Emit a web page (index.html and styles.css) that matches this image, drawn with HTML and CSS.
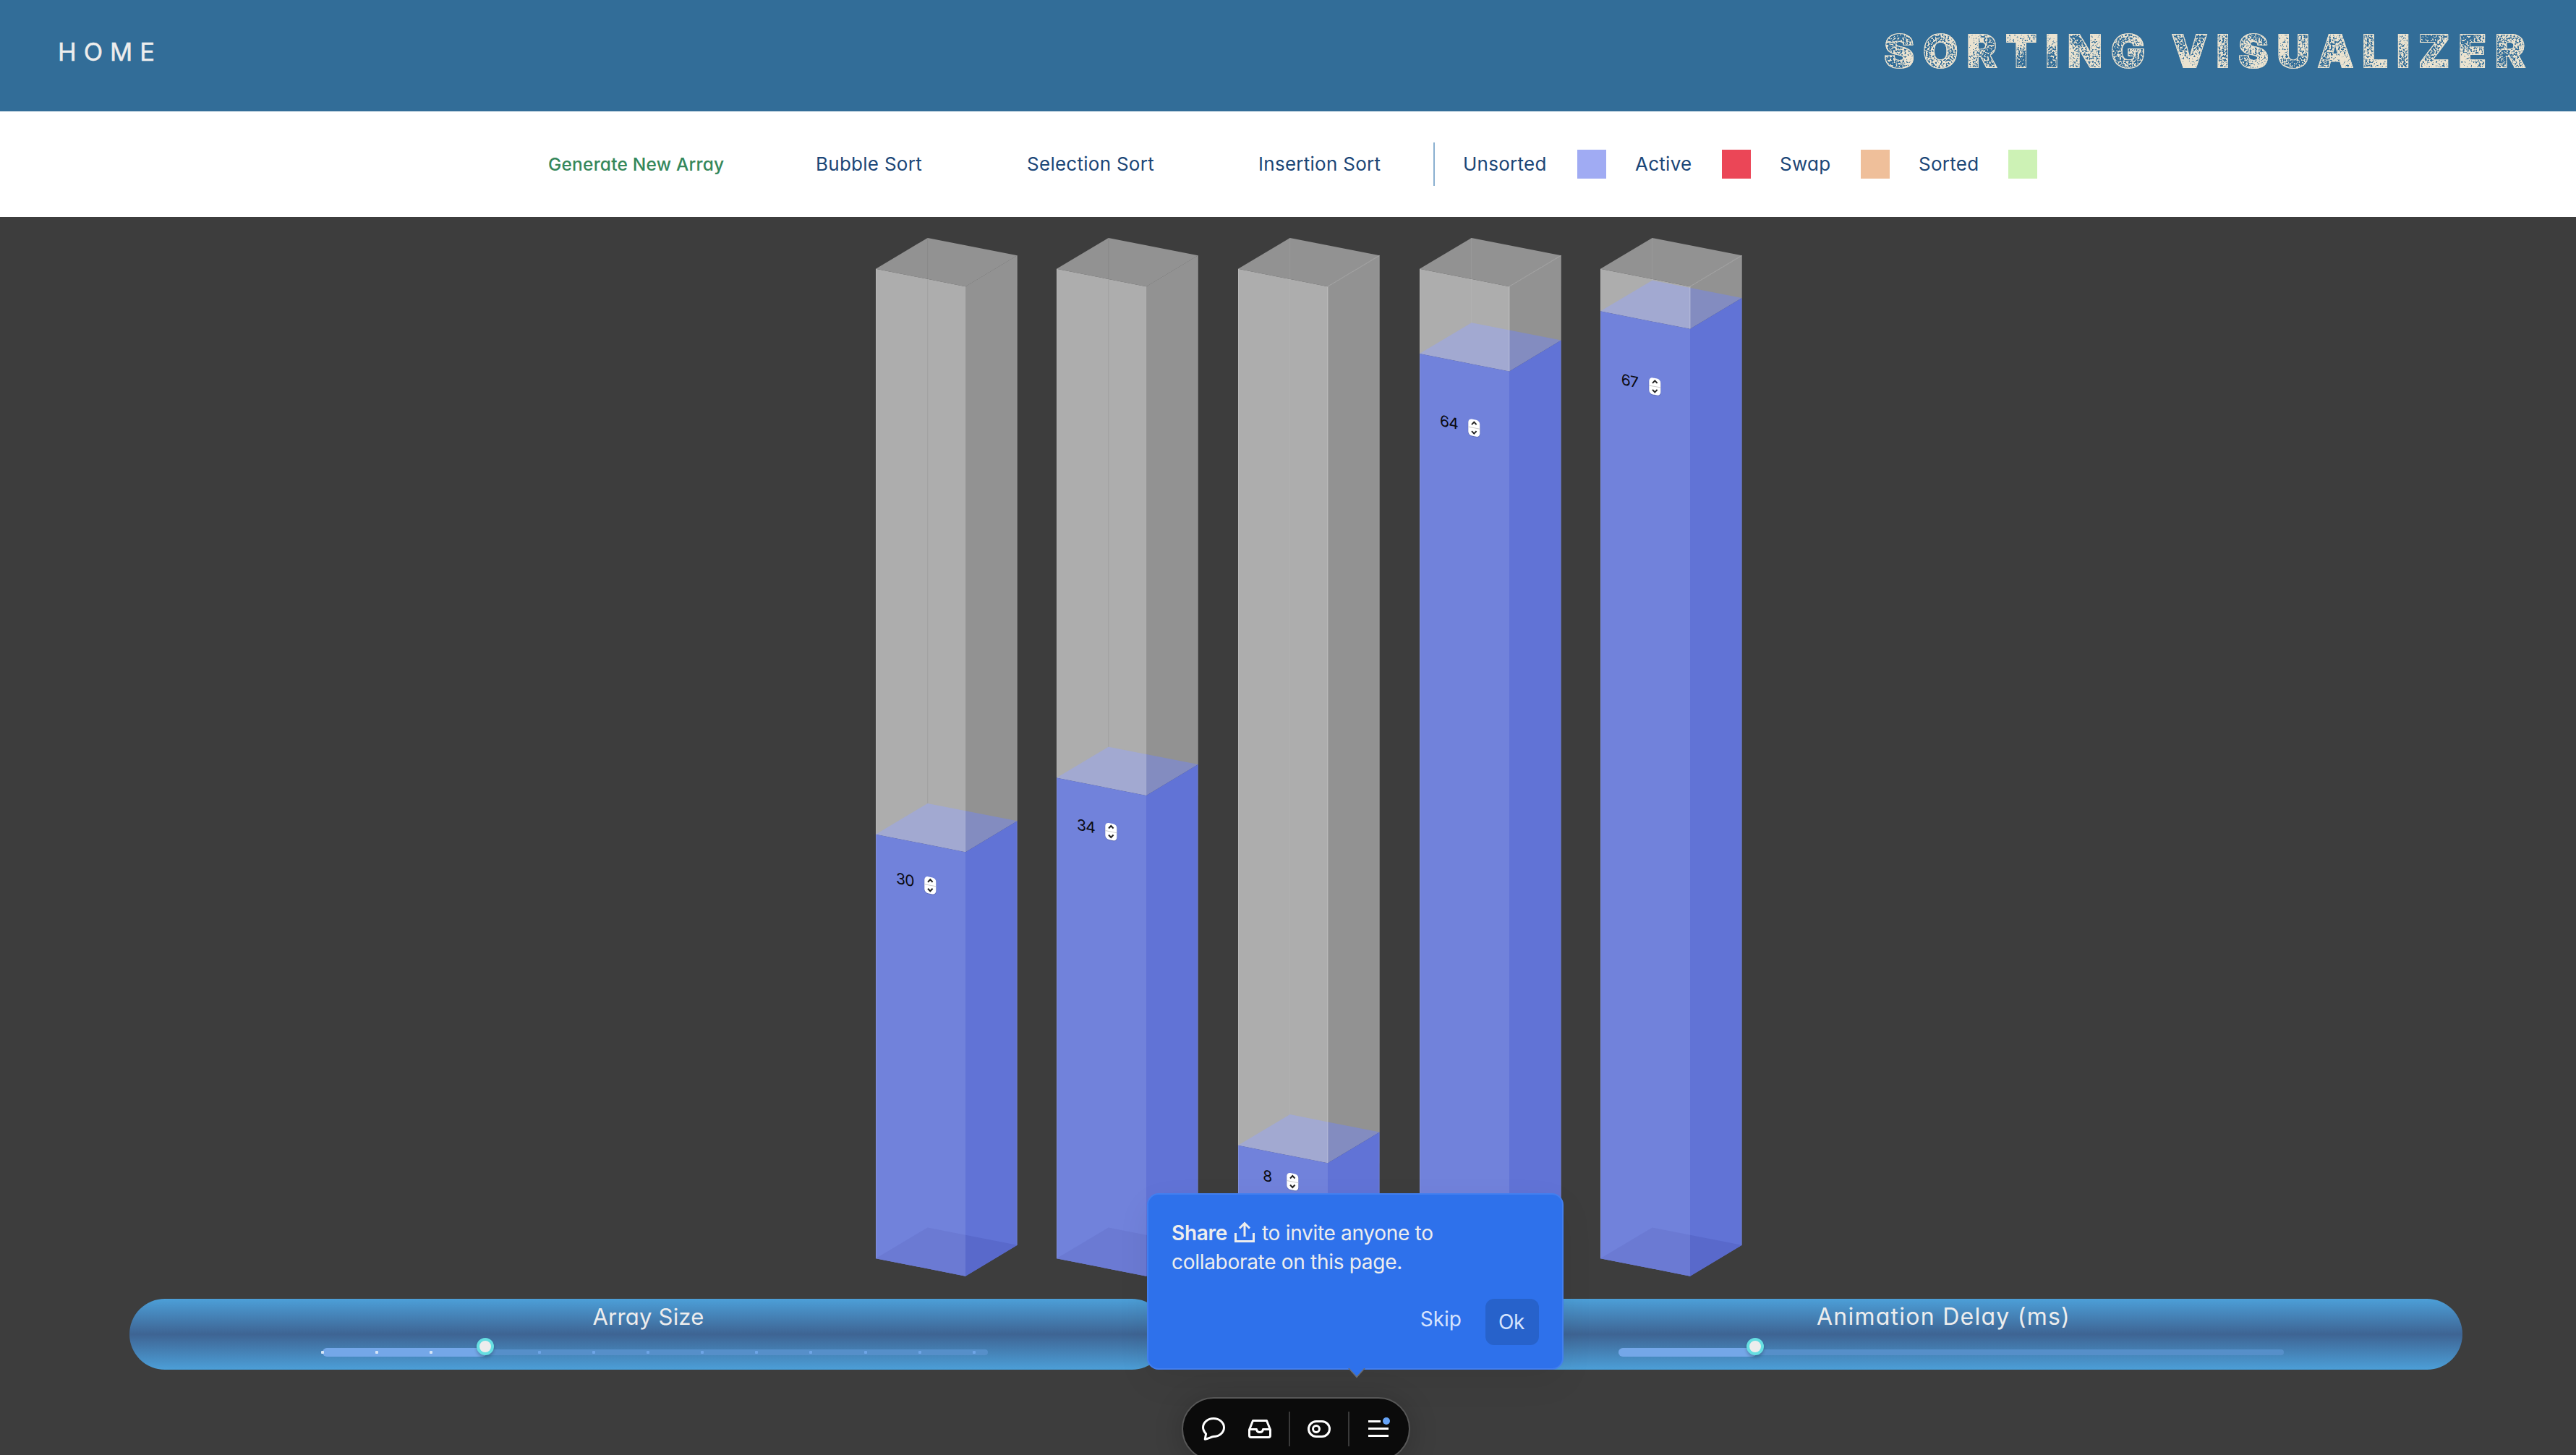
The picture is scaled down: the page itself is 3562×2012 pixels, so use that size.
FILE: index.html
```html
<!DOCTYPE html>
<html lang="en">
<head>
<meta charset="utf-8">
<title>Sorting Visualizer</title>
<link rel="stylesheet" href="styles.css">
</head>
<body>
<svg class="defs" width="0" height="0" aria-hidden="true">
  <filter id="dirt" x="0" y="0" width="100%" height="100%" color-interpolation-filters="sRGB">
    <feTurbulence type="fractalNoise" baseFrequency="0.4" numOctaves="2" seed="4" result="fine"/>
    <feTurbulence type="fractalNoise" baseFrequency="0.03" numOctaves="1" seed="9" result="patches"/>
    <feColorMatrix in="fine" type="matrix" values="0 0 0 0 0  0 0 0 0 0  0 0 0 0 0  0 0 0 0.5 0" result="fineHalf"/>
    <feColorMatrix in="patches" type="matrix" values="0 0 0 0 0  0 0 0 0 0  0 0 0 0 0  0 0 0 0.4 0" result="patchHalf"/>
    <feComposite in="fineHalf" in2="patchHalf" operator="arithmetic" k2="1" k3="1" result="mix"/>
    <feColorMatrix in="mix" type="matrix" values="0 0 0 0 0  0 0 0 0 0  0 0 0 0 0  0 0 0 14 -5.500" result="specks"/>
    <feMorphology in="SourceAlpha" operator="erode" radius="1" result="core"/>
    <feComposite in="SourceGraphic" in2="core" operator="out" result="edge"/>
    <feComposite in="SourceGraphic" in2="specks" operator="in" result="worn"/>
    <feMerge><feMergeNode in="worn"/><feMergeNode in="edge"/></feMerge>
  </filter>
</svg>
<header class="header">
  <a class="home">HOME</a>
  <h1 class="title">SORTING VISUALIZER</h1>
</header>
<nav class="controls">
  <button class="generate">Generate New Array</button>
  <button class="algo bubble">Bubble Sort</button>
  <button class="algo selection">Selection Sort</button>
  <button class="algo insertion">Insertion Sort</button>
  <div class="legend">
    <span class="key unsorted-key">Unsorted</span><i class="swatch unsorted"></i>
    <span class="key active-key">Active</span><i class="swatch active"></i>
    <span class="key swap-key">Swap</span><i class="swatch swap"></i>
    <span class="key sorted-key">Sorted</span><i class="swatch sorted"></i>
  </div>
</nav>
<main class="stage" id="stage"></main>
<section class="sliders">
  <div class="panel">
    <label class="array-label">Array Size</label>
    <div class="track size-track"><i class="rail"></i><i class="fill" style="width:227px"></i><span class="ticks" id="ticks"></span><i class="thumb" style="left:225px"></i></div>
  </div>
  <div class="panel">
    <label class="delay-label">Animation Delay (ms)</label>
    <div class="track delay-track"><i class="rail"></i><i class="fill" style="width:191px"></i><i class="thumb" style="left:189px"></i></div>
  </div>
</section>
<aside class="tip">
  <p class="tip-text"><b>Share</b><svg class="share" width="28" height="30" viewBox="0 0 28 30"><path d="M1.5 16V27.5H26.5V16M14 21V3M7 9.500L14 2.500L21 9.500" fill="none" stroke="#ededed" stroke-width="3"/></svg><span class="invite">to invite anyone to</span><br><span class="collab">collaborate on this page.</span></p>
  <div class="tip-actions"><button class="skip">Skip</button><button class="ok">Ok</button></div>
  <svg class="caret" width="24" height="14" viewBox="0 0 24 14"><path d="M0 0H24L12 13.500Z" fill="#6b6e74"/><path d="M1.800 0H22.200L12 11Z" fill="#2e71eb"/></svg>
</aside>
<div class="toolbar">
  <svg class="tool" width="32" height="32" viewBox="0 0 32 32"><path d="M4.200 30.200L5.600 22.800C3 19.800 1.500 17 1.500 13.800C1.500 6.800 8 1.500 16 1.500S30.500 7 30.500 14S24 26.500 16 26.500C12 27.200 9 29.800 4.200 30.200Z"/></svg>
  <svg class="tool" width="32" height="32" viewBox="0 0 32 32"><path d="M6.500 4.500H25.500L30.500 17V25Q30.500 27.500 28 27.500H4Q1.500 27.500 1.500 25V17ZM1.500 16.500H11.500Q12 20.500 16 20.500T20.500 16.500H30.500"/></svg>
  <i class="sep"></i>
  <svg class="tool" width="32" height="32" viewBox="0 0 32 32"><rect x="1.500" y="5.500" width="29" height="21" rx="10.500"/><circle cx="12" cy="16" r="4.500"/></svg>
  <i class="sep"></i>
  <svg class="tool" width="32" height="32" viewBox="0 0 32 32"><path d="M2 5.500H19M2 15.500H30M2 25.500H30"/><circle cx="27" cy="5" r="5" fill="#65a3f7" stroke="none"/></svg>
</div>
<script src="app.js"></script>
</body>
</html>
```
FILE: styles.css
```css
* { box-sizing: border-box; }
body {
  margin: 0;
  height: 2012px;
  overflow: hidden;
  position: relative;
  display: flex;
  flex-direction: column;
  background: #3d3d3d;
  font-family: Inter, "Open Sans", sans-serif;
  font-feature-settings: "cv11";
}
button { border: 0; padding: 0; background: none; font: inherit; font-feature-settings: inherit; letter-spacing: inherit; color: inherit; white-space: nowrap; text-align: left; }
.defs { position: absolute; }
.header {
  height: 154px;
  flex: none;
  display: flex;
  justify-content: space-between;
  align-items: flex-start;
  padding: 35px 58px 0 80px;
  background: #326d98;
}
.home { font-size: 34.500px; line-height: 73px; letter-spacing: 10px; color: #ededed; -webkit-text-stroke: .5px #ededed; }
.title { margin: 0; font-size: 62px; font-weight: 900; line-height: 71px; letter-spacing: 12.400px; color: #ebe3d0; -webkit-text-stroke: 2px #ebe3d0; filter: url(#dirt); }
.controls {
  height: 146px;
  flex: none;
  display: flex;
  align-items: center;
  padding: 0 0 0 758px;
  background: #fff;
  color: #1b4677;
  font-size: 26px;
  line-height: 40px;
  letter-spacing: .27px;
}
.generate { width: 370px; font-size: 24.500px; font-weight: 500; letter-spacing: .2px; color: #35875a; }
.bubble { width: 292px; }
.selection { width: 320px; }
.insertion { width: 242px; }
.legend { display: flex; align-items: center; height: 60px; padding-left: 39px; border-left: 2px solid #8ab0d0; }
.key { white-space: nowrap; }
.unsorted-key { width: 158px; }
.active-key, .swap-key, .sorted-key { margin-left: 40px; }
.active-key { width: 120px; }
.swap-key { width: 112px; }
.sorted-key { width: 124px; }
.swatch { width: 40px; height: 40px; }
.unsorted { background: #a0abf3; }
.active { background: #eb4657; }
.swap { background: #efbf9a; }
.sorted { background: #cdf2b5; }

.stage { height: 1496px; flex: none; display: flex; gap: 54.700px; padding: 28.700px 0 0 1210.700px; }
.bar { flex: none; width: 196px; height: 1437px; overflow: visible; }
.value { font-size: 21px; letter-spacing: -.7px; text-anchor: middle; fill: #0b0b12; }

.sliders { height: 98px; flex: none; display: flex; justify-content: space-between; padding: 0 157px 0 179px; }
.panel {
  width: 1435px;
  border-radius: 49px;
  background: linear-gradient(#4c9fd8, #3e6493 50%, #4c9fd8);
  color: #ededed;
  font-size: 31px;
  line-height: 50px;
  text-align: center;
}
.panel label { display: block; height: 50px; }
.array-label { letter-spacing: .2px; }
.delay-label { font-size: 32px; letter-spacing: 1.250px; }
.track { position: relative; width: 920px; height: 40px; margin-left: 267px; }
.delay-track { margin-left: 268px; }
.rail, .fill, .thumb, .tick { position: absolute; }
.rail { left: 0; right: 0; top: 20px; height: 8px; border-radius: 4px; background: #568fc9; }
.fill { left: 0; top: 18px; height: 12px; border-radius: 6px; background: #74a7e8; }
.thumb { top: 4px; width: 24px; height: 24px; margin-left: -12px; border: 4px solid #66dfe2; border-radius: 50%; background: #ededed; box-shadow: 0 3px 4px rgba(0,0,0,.22); }
.tick { top: 22px; width: 4px; height: 4px; margin-left: -2px; border-radius: 1px; background: #6ea5e6; }
.tick.on { background: #d5e4f6; }

.tip {
  position: absolute;
  left: 1586px;
  top: 1650px;
  width: 576px;
  height: 244px;
  padding: 33px 32px;
  border: 2px solid #427ff0;
  border-radius: 16px;
  background: #2e71eb;
  color: #ededed;
  font-size: 28px;
  line-height: 40px;
  font-feature-settings: normal;
  box-shadow: 0 16px 48px rgba(0,0,0,.06);
}
.tip-text { margin: 0; height: 111px; white-space: nowrap; letter-spacing: -.300px; }
.tip-text b { font-weight: 600; }
.share { margin: 0 10px; vertical-align: -4px; }
.tip-actions { display: flex; justify-content: flex-end; align-items: flex-start; gap: 33px; color: #d5e3fd; }
.skip { line-height: 56px; }
.ok { width: 74px; height: 64px; padding-right: 2px; border-radius: 12px; background: #2762cb; text-align: center; letter-spacing: -.500px; }
.caret { position: absolute; left: 276px; top: 240px; }
.toolbar {
  position: absolute;
  left: 1634px;
  top: 1932px;
  width: 316px;
  height: 88px;
  display: flex;
  align-items: center;
  padding-left: 26px;
  border: 2px solid #575757;
  border-radius: 44px;
  background: #0b0b0b;
  box-shadow: 0 4px 40px rgba(0,0,0,.2);
}
.tool { fill: none; stroke: #fff; stroke-width: 3; stroke-linejoin: round; }
.tool + .tool { margin-left: 32px; }
.sep { width: 2px; height: 48px; margin: 0 24px; background: #3a3a3a; }
```
FILE: app.js
```js
// Each bar is a 70-unit glass column, filled up to its value.
const UNIT = 19.55;
const MAX = 70;
const bars = [
  { value: 30, inputY: 882.2 },
  { value: 34, inputY: 808 },
  { value: 8, inputY: 1292 },
  { value: 64, inputY: 249.6 },
  { value: 67, inputY: 192.4 }
];

function barMarkup({ value, inputY }) {
  const t = (MAX - value) * UNIT;
  const b = MAX * UNIT;
  const poly = (pts, fill) =>
    `<polygon points="${pts.map(p => p.join(",")).join(" ")}" fill="${fill}"/>`;
  const L = y => [0, 42.7 + y], B = y => [71.7, y], R = y => [195.6, 24.3 + y], F = y => [124, 67.2 + y];
  // where the back edge of a slab passes behind the front vertical edge
  const X = y => [124, 10.3 + y];
  return `<svg class="bar" viewBox="0 0 196 1437">
    ${poly([L(0), B(0), R(0), F(0)], "#929292")}
    ${poly([L(0), F(0), F(t), L(t)], "#adadad")}
    ${poly([F(0), R(0), R(t), F(t)], "#929292")}
    <clipPath id="c${value}">${poly([L(0), F(0), R(0), R(b), F(b), L(b)], "#000")}</clipPath>
    <g clip-path="url(#c${value})">
    ${poly([L(t), B(t), X(t), F(t)], "#a2a9d1")}
    ${poly([X(t), R(t), F(t)], "#838cc0")}
    </g>
    ${poly([L(t), F(t), F(b), L(b)], "#7182db")}
    ${poly([F(t), R(t), R(b), F(b)], "#6173d6")}
    ${poly([L(b), B(b), X(b), F(b)], "#6b7ad3")}
    ${poly([X(b), R(b), F(b)], "#5969cb")}
    <path d="M71.700 0V${t}" stroke="${value > 60 || value < 10 ? "#fff" : "#000"}" stroke-opacity=".07" fill="none"/>
    <path d="M.5 42.700V${42.7 + b}M195.200 24.300V${24.3 + b}" stroke="#fff" stroke-opacity=".12" fill="none"/>
    <path d="M124 67.200V${67.2 + t}M124 67.200L195.600 24.300" stroke="#fff" stroke-opacity="${value > 60 || value < 10 ? 0.3 : 0.07}" fill="none"/>
    <g transform="translate(0 ${inputY})">
      <text class="value" transform="translate(40.500 12.700) skewY(11.200)">${value}</text>
      <g transform="translate(67.300 0) skewY(11.200)">
        <rect x="-.5" y=".5" width="17" height="23.500" rx="5.500" fill="#223" fill-opacity=".2"/>
        <rect width="16" height="23" rx="5" fill="#fff"/>
        <path d="M0 11.500H16" stroke="#ccc"/>
      </g>
      <path d="M72 8.500L75.300 5L78.600 8.500M72 17.500L75.300 21L78.600 17.500" fill="none" stroke="#222" stroke-width="2"/>
    </g>
  </svg>`;
}
document.getElementById("stage").innerHTML = bars.map(barMarkup).join("");
document.getElementById("ticks").innerHTML = Array.from({ length: 13 }, (_, i) =>
  `<i class="tick${i < 3 ? " on" : ""}" style="left:${i * 75.05}px"></i>`).join("");
```
